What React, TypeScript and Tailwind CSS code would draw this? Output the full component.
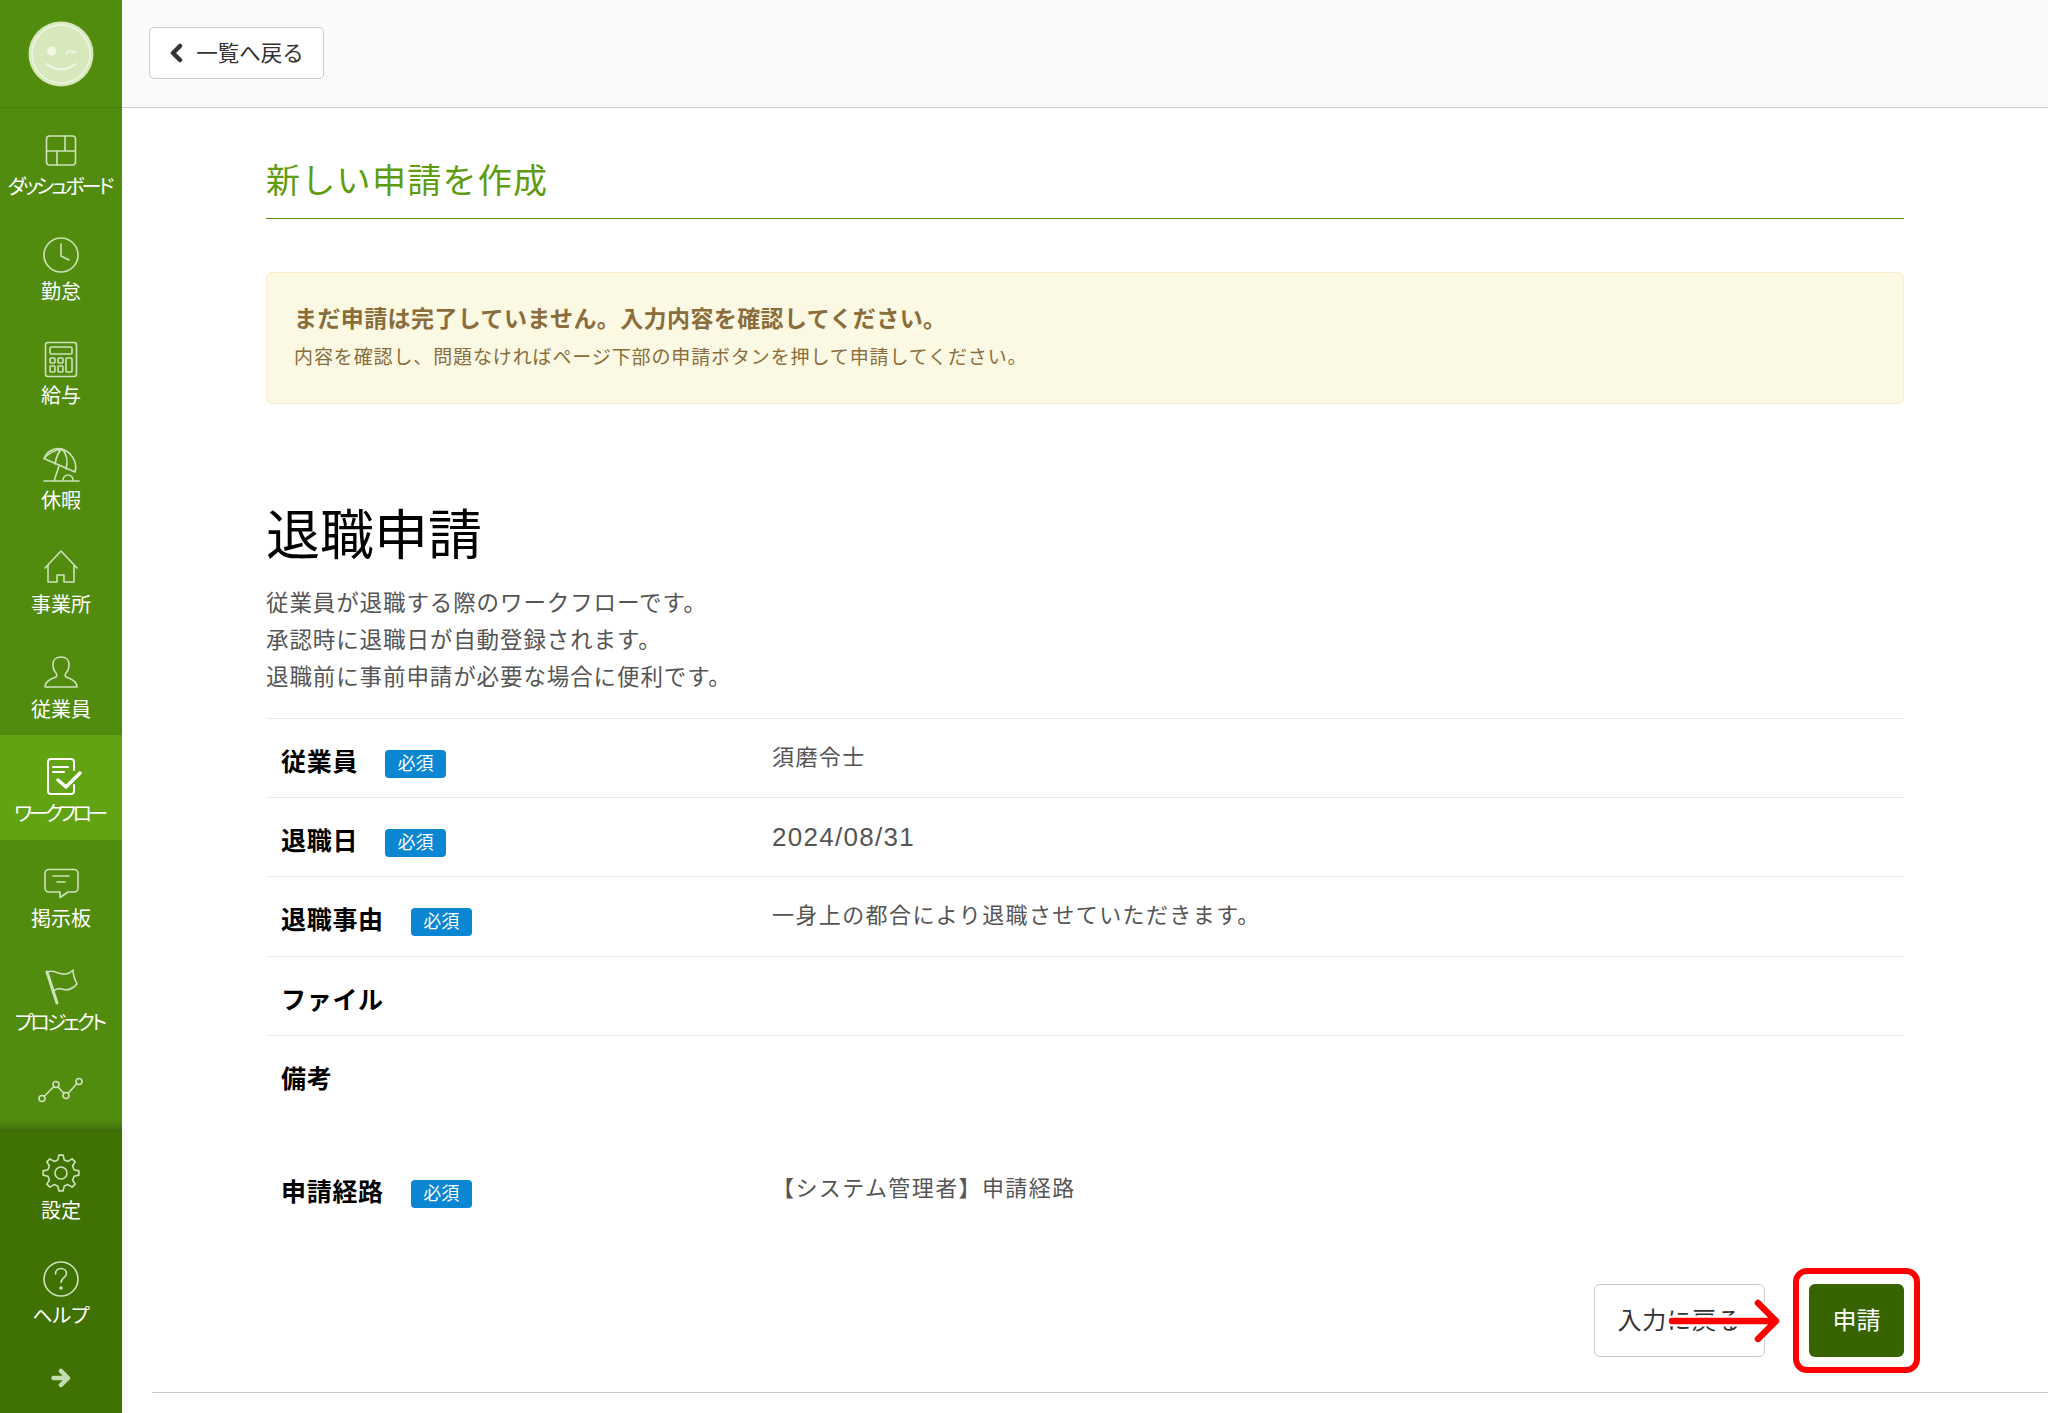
import React from "react";

const gearPath = (() => {
  const cx = 24, cy = 21, n = 8, R = 18, r = 13.5;
  let d = "";
  for (let i = 0; i < n; i++) {
    const a = (i * 2 * Math.PI) / n - Math.PI / 2;
    const w = Math.PI / n;
    const pts: [number, number][] = [
      [r, a - w * 0.62],
      [R, a - w * 0.3],
      [R, a + w * 0.3],
      [r, a + w * 0.62],
    ];
    pts.forEach(([rad, t], j) => {
      const x = (cx + rad * Math.cos(t)).toFixed(2);
      const y = (cy + rad * Math.sin(t)).toFixed(2);
      d += `${i === 0 && j === 0 ? "M" : "L"}${x} ${y} `;
    });
  }
  return d + "Z";
})();

const icons: Record<string, React.ReactNode> = {
  dash: (
    <>
      <rect x="9.5" y="8" width="29" height="29" rx="3" />
      <path d="M9.5 23h29M28 8v15M20 23v14" />
    </>
  ),
  clock: (
    <>
      <circle cx="24" cy="22" r="17" />
      <path d="M24 11v12l8 4" />
    </>
  ),
  calc: (
    <>
      <rect x="8.5" y="5.5" width="31" height="34" rx="2.5" />
      <rect x="13" y="10" width="22" height="7" rx="1.5" />
      <rect x="13" y="21" width="5" height="5" rx="1" />
      <rect x="21" y="21" width="5" height="5" rx="1" />
      <rect x="13" y="29" width="5" height="6" rx="1" />
      <rect x="21" y="29" width="5" height="6" rx="1" />
      <rect x="29" y="21" width="6" height="14" rx="1" />
    </>
  ),
  umbrella: (
    <>
      <path d="M7 16.5C10 9 18 5 25 7C34 10 41 20 38 30Z" />
      <path d="M7 16.5C11 12 18 8 25 7C21 10 19 16 18 22M25 7C30 12 31 20 29 27" />
      <path d="M22 24L17 39M7 39h35" />
      <path d="M26 38a5 5 0 1 1 10 0" />
    </>
  ),
  house: <path d="M8 22L24 5L40 22M11 19V36H20V29H27V36H37V19" />,
  person: (
    <path d="M8 36c0-6 6-8 11-10c1-1 1-3 0-4c-2-2-3-5-3-9c0-4 3-7 8-7s8 3 8 7c0 4-1 7-3 9c-1 1-1 3 0 4c5 2 11 4 11 10z" />
  ),
  flow: (
    <>
      <path d="M37 15V7a3 3 0 0 0-3-3H14a3 3 0 0 0-3 3v29a3 3 0 0 0 3 3h20a3 3 0 0 0 3-3V30" strokeWidth="2" />
      <path d="M16 12h15M16 17h11" strokeWidth="2" />
      <path d="M21 25l8 7l14-14" strokeWidth="3.5" />
    </>
  ),
  board: (
    <>
      <path d="M12 9.5h25a4 4 0 0 1 4 4v14.500a4 4 0 0 1-4 4h-6l-8 5.500v-5.500h-11a4 4 0 0 1-4-4v-14.500a4 4 0 0 1 4-4z" />
      <path d="M16 16h16M20 22h8" />
    </>
  ),
  flag: (
    <>
      <path d="M10 8L20 39" strokeWidth="3" />
      <path d="M10 8C17 5 22 11 28 10C31 10 34 8 36 6C36 11 38 16 40 20C36 25 30 27 25 25C22 24 19 25 16 27" />
    </>
  ),
  chart: (
    <>
      <path d="M7 27.500L17 17.500M21 18L27 24.500M31 24.500L40 14.500" />
      <circle cx="5" cy="29.500" r="3" />
      <circle cx="19" cy="15.500" r="3" />
      <circle cx="29" cy="26.500" r="3" />
      <circle cx="42" cy="12.500" r="3" />
    </>
  ),
  gear: (
    <>
      <path d={gearPath} strokeLinejoin="round" />
      <circle cx="24" cy="21" r="6" />
    </>
  ),
  help: (
    <>
      <circle cx="24" cy="22" r="17" />
      <path d="M18.500 17c0-3.500 2.500-5.500 5.500-5.500s5.500 2 5.500 5c0 4-5.500 4.500-5.500 9" />
      <circle cx="24" cy="31" r="1" fill="currentColor" />
    </>
  ),
};

function NavIcon({ name, active }: { name: string; active?: boolean }) {
  return (
    <svg
      viewBox="0 0 48 44"
      fill="none"
      stroke="currentColor"
      strokeWidth="1.6"
      strokeLinecap="round"
      strokeLinejoin="round"
      className={active ? "h-[44px] w-[48px] text-white" : "h-[44px] w-[48px] text-[#cfe2bd]"}
    >
      {icons[name]}
    </svg>
  );
}

function NavItem({ icon, label, active, tight }: { icon: string; label: string; active?: boolean; tight?: string }) {
  return (
    <div
      className={
        active
          ? "flex h-[104.5px] flex-col items-center pt-[20px] bg-[#62a314]"
          : "flex h-[104.5px] flex-col items-center pt-[20px]"
      }
    >
      <NavIcon name={icon} active={active} />
      <div
        className={`mt-[5.4px] whitespace-nowrap text-[20px] leading-[20px] text-white [font-feature-settings:'palt'] ${tight ?? ""}`}
      >
        {label}
      </div>
    </div>
  );
}

function Badge() {
  return (
    <span className="flex h-[28px] w-[61px] items-center justify-center rounded-[4px] bg-[#0a86d2] text-[18px] leading-none text-white">
      必須
    </span>
  );
}

function Row({
  label,
  required,
  value,
  border = true,
  height = "h-[79.25px]",
  num,
  valuePad = "pt-[24px]",
}: {
  label: string;
  required?: boolean;
  value?: string;
  border?: boolean;
  height?: string;
  num?: boolean;
  valuePad?: string;
}) {
  return (
    <div className={`flex ${height} ${border ? "border-t border-[#eaeaea]" : ""}`}>
      <div className="flex w-[506px] items-start pl-[15px] pt-[28px]">
        <span className="text-[25px] font-bold leading-[30px] tracking-[0.7px] text-black">{label}</span>
        {required && (
          <span className="ml-[27px] mt-[3px]">
            <Badge />
          </span>
        )}
      </div>
      {value && (
        <div
          className={
            num
              ? `${valuePad} text-[26px] leading-[30px] tracking-[1.3px] text-[#555555]`
              : `${valuePad} text-[22px] leading-[30px] tracking-[1.4px] text-[#555555]`
          }
        >
          {value}
        </div>
      )}
    </div>
  );
}

export default function App() {
  return (
    <div className="flex h-[1413px] w-[2048px] overflow-hidden bg-white font-['Liberation_Sans','Noto_Sans_CJK_JP',sans-serif]">
      <aside className="flex h-full w-[122px] shrink-0 flex-col bg-[#528c0e]">
        <div className="flex h-[108px] shrink-0 items-center justify-center border-b border-[#4a8009]">
          <svg viewBox="0 0 66 66" className="h-[66px] w-[66px]">
            <circle cx="33" cy="33" r="32.500" fill="#d7e9bc" />
            <circle cx="33" cy="33" r="29" fill="none" stroke="#edf5e2" strokeWidth="1.500" />
            <circle cx="23.500" cy="30" r="4.500" fill="#f0f7e6" />
            <path d="M38 33c2-3 6-4 9-1.500" fill="none" stroke="#f0f7e6" strokeWidth="1.800" strokeLinecap="round" />
            <path d="M18.500 43c8 7 21 7 29 0" fill="none" stroke="#f0f7e6" strokeWidth="2" strokeLinecap="round" />
          </svg>
        </div>
        <NavItem icon="dash" label="ダッシュボード" tight="tracking-[-2.9px] mr-[3px]" />
        <NavItem icon="clock" label="勤怠" />
        <NavItem icon="calc" label="給与" />
        <NavItem icon="umbrella" label="休暇" />
        <NavItem icon="house" label="事業所" />
        <NavItem icon="person" label="従業員" />
        <NavItem icon="flow" label="ワークフロー" active tight="tracking-[-3.5px] mr-[3px]" />
        <NavItem icon="board" label="掲示板" />
        <NavItem icon="flag" label="プロジェクト" tight="tracking-[-3px] mr-[3px]" />
        <div className="flex h-[83.5px] shrink-0 flex-col items-center pt-[20px]">
          <NavIcon name="chart" />
          <div className="mt-auto h-[12px] w-full bg-gradient-to-b from-transparent to-black/25" />
        </div>
        <div className="flex flex-1 flex-col bg-[#407103]">
          <NavItem icon="gear" label="設定" />
          <NavItem icon="help" label="ヘルプ" />
          <div className="flex justify-center pt-[27px]">
            <svg viewBox="0 0 20 20" fill="none" stroke="#c5dcb0" strokeWidth="4.500" strokeLinejoin="round" strokeLinecap="round" className="h-[20px] w-[20px]">
              <path d="M2.500 10H16M10 3l7 7l-7 7" />
            </svg>
          </div>
        </div>
      </aside>

      <main className="flex min-w-0 flex-1 flex-col">
        <header className="flex h-[108px] shrink-0 items-start border-b border-[#cccccc] bg-[#fafafa] pl-[27px] pt-[27px]">
          <button className="flex h-[52px] w-[175px] items-center justify-center gap-[13px] rounded-[5px] border border-[#cccccc] bg-white text-[21.5px] text-[#333333]">
            <svg viewBox="0 0 14 20" fill="none" stroke="#333333" strokeWidth="4.500" strokeLinejoin="round" strokeLinecap="round" className="h-[20px] w-[14px]">
              <path d="M11 3L4 10L11 17" />
            </svg>
            <span className="mt-[2px]">一覧へ戻る</span>
          </button>
        </header>

        <div className="px-[144px]">
          <div className="border-b border-[#5c8a14] pb-[13px] pt-[49px]">
            <h1 className="text-[34px] font-normal leading-[48px] tracking-[1.3px] text-[#5e9c0f]">新しい申請を作成</h1>
          </div>

          <div className="mt-[53px] flex h-[132px] flex-col rounded-[6px] border border-[#faebcc] bg-[#fbf8e3] px-[27px] pt-[31px] text-[#8a6d3b]">
            <div className="text-[23px] font-bold leading-[30px] tracking-[0.4px]">まだ申請は完了していません。入力内容を確認してください。</div>
            <div className="mt-[9px] text-[19px] leading-[30px] tracking-[0.88px]">
              内容を確認し、問題なければページ下部の申請ボタンを押して申請してください。
            </div>
          </div>

          <h2 className="mt-[102px] text-[54px] font-normal leading-[60px] text-black">退職申請</h2>

          <div className="mt-[20px] text-[22.5px] leading-[36.8px] tracking-[0.9px] text-[#555555]">
            <p>従業員が退職する際のワークフローです。</p>
            <p>承認時に退職日が自動登録されます。</p>
            <p>退職前に事前申請が必要な場合に便利です。</p>
          </div>

          <div className="mt-[21.5px]">
            <Row label="従業員" required value="須磨令士" />
            <Row label="退職日" required value="2024/08/31" num />
            <Row label="退職事由" required value="一身上の都合により退職させていただきます。" />
            <Row label="ファイル" />
            <Row label="備考" height="h-[114px]" />
            <Row label="申請経路" required value="【システム管理者】申請経路" border={false} valuePad="pt-[25px]" />
          </div>

          <div className="relative mt-[56px] flex justify-end gap-[44px]">
            <button className="h-[73px] w-[171px] rounded-[6px] border border-[#cccccc] bg-white text-[24px] tracking-[0.8px] text-[#333333]">
              入力に戻る
            </button>
            <div className="relative">
              <button className="h-[73px] w-[95px] rounded-[6px] bg-[#386400] text-[24px] text-white">申請</button>
              <div className="absolute -inset-[16px] rounded-[14px] border-[6px] border-[#ff0000]" />
            </div>
            <svg
              viewBox="0 0 130 60"
              fill="none"
              strokeLinecap="round"
              strokeLinejoin="round"
              className="absolute right-[114px] top-[7px] h-[60px] w-[130px]"
            >
              <path d="M12 30H115M98 12L116 30L98 48" stroke="#ffffff" strokeWidth="11" />
              <path d="M12 30H115M98 12L116 30L98 48" stroke="#ff0000" strokeWidth="6.500" />
            </svg>
          </div>
        </div>

        <div className="ml-[30px] mt-[35px] border-t border-[#cccccc]" />
      </main>
    </div>
  );
}
